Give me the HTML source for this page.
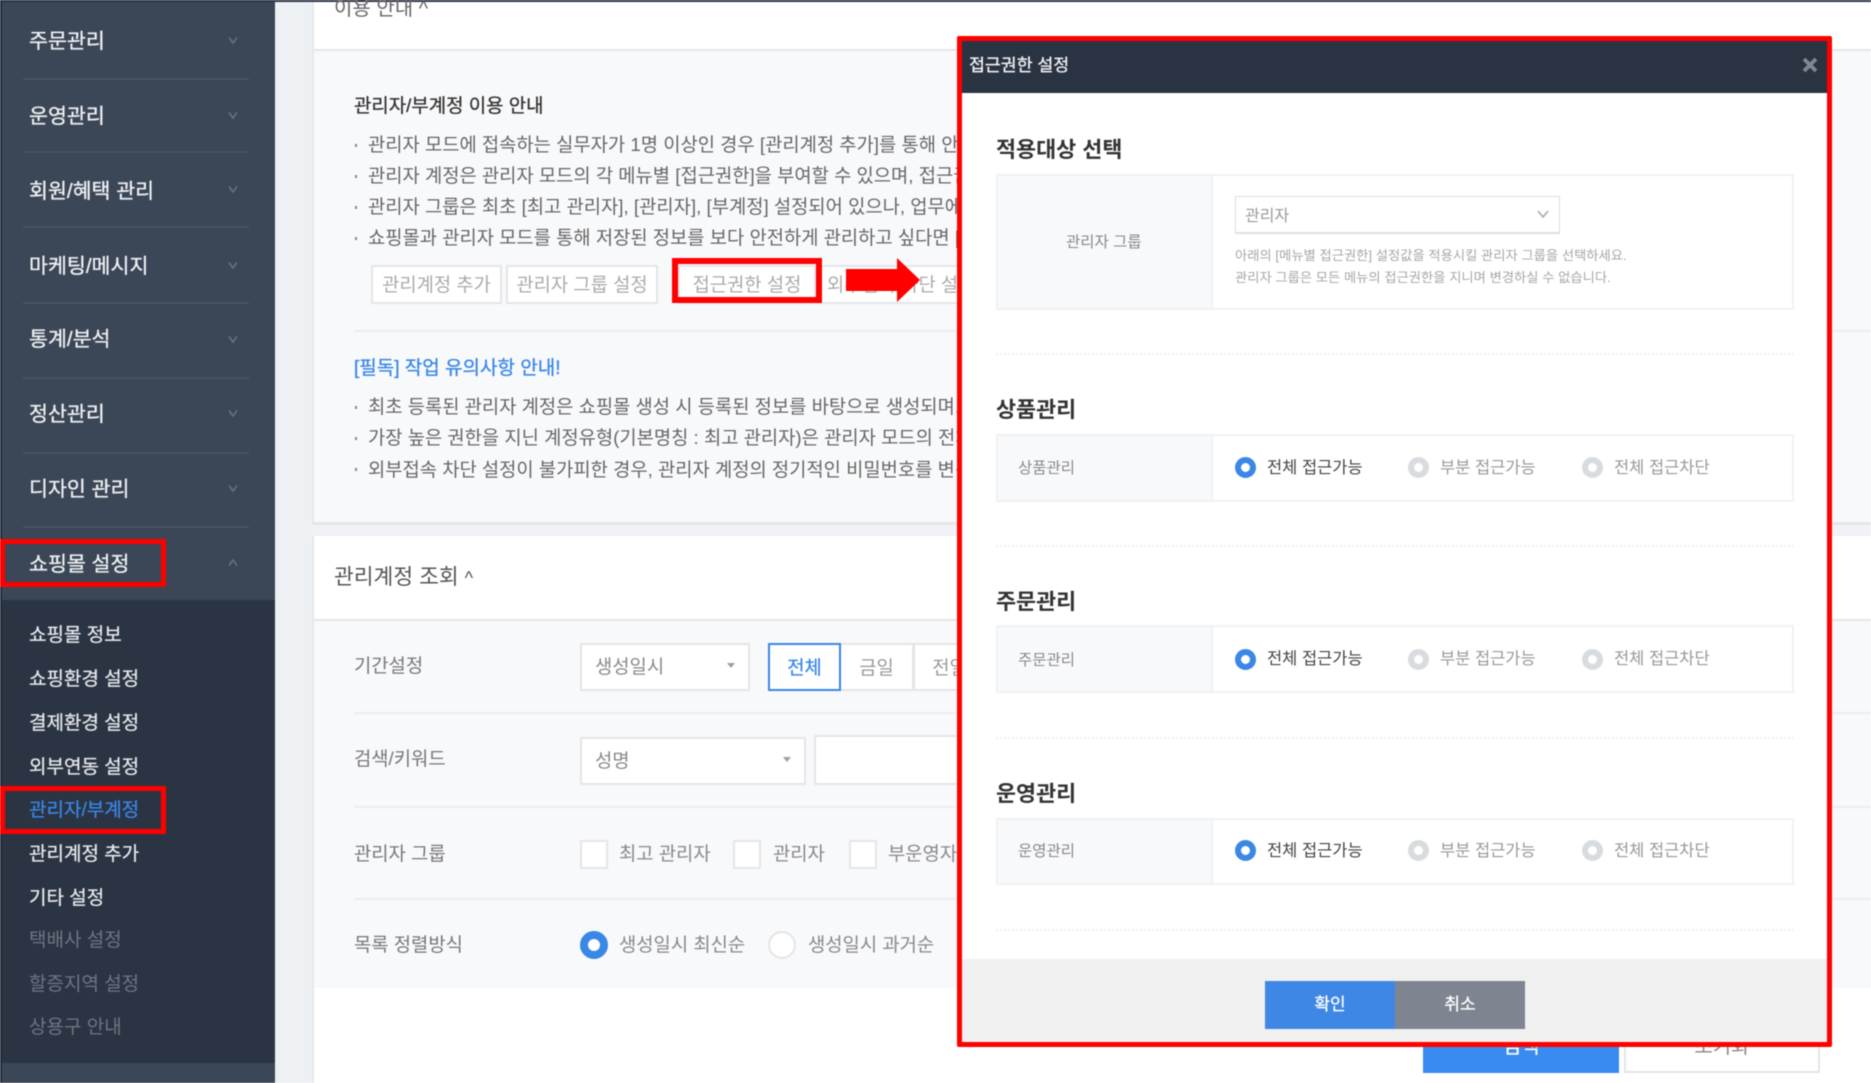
<!DOCTYPE html>
<html lang="ko"><head><meta charset="utf-8"><title>접근권한 설정</title>
<style>
*{box-sizing:border-box;margin:0;padding:0}
html,body{width:1871px;height:1083px;overflow:hidden;background:#fff}
body{position:relative;font-family:"Liberation Sans","Noto Sans CJK KR",sans-serif;filter:blur(.45px)}
.a{position:absolute}
.t{position:absolute;white-space:nowrap;line-height:30px;height:30px}
.side{color:#eef0f3;font-size:20.6px;-webkit-text-stroke:.35px #eef0f3;left:29px}
.sub{color:#e6e9ed;font-size:19px;-webkit-text-stroke:.25px #e6e9ed;left:29px}
.sub.off{color:#6c7683;-webkit-text-stroke:0}
.sep{position:absolute;left:23px;width:226px;height:2px;background:#475262}
.chev{position:absolute;left:228px;width:10px;height:10px}
.g{color:#666;font-size:18.75px;left:368px}
.dot{position:absolute;left:355px;width:2px;height:3px;background:#888}
.line{position:absolute;left:354px;right:0;height:2px;background:#eceef1}
.box{position:absolute;background:#fff;border:2px solid #e3e5e8}
.lab{color:#777;font-size:18.8px;left:354px}
.val{color:#888;font-size:18.8px}
.btn{position:absolute;background:#fff;border:2px solid #e3e5e8;color:#aaa;font-size:18.75px;text-align:center;line-height:35px;white-space:nowrap;overflow:hidden}
.h2{color:#333;font-size:21.8px;font-weight:700;left:996px}
.tb{position:absolute;left:996px;width:798px;background:#fff;border:2px solid #f0f1f3}
.th{position:absolute;left:0;top:0;bottom:0;width:215px;background:#f8f9fb;border-right:2px solid #f0f1f3}
.mt{color:#888;font-size:15.5px}
.dash{position:absolute;left:996px;width:798px;height:0;border-top:2px dotted #eeeff1}
.r{position:absolute;width:21px;height:21px;border-radius:50%;border:6px solid #d9dcdf;background:#fff}
.r.on{border-color:#3a87e6}
.rl{font-size:16.5px;color:#999}
.rl.on{color:#444}
</style></head><body>

<!-- main background -->
<div class="a" style="left:0;top:0;width:1871px;height:2px;background:#2c3442"></div>
<div class="a" style="left:275px;top:2px;width:37px;height:1081px;background:#eef1f4"></div>
<div class="a" style="left:312px;top:2px;right:0;height:48px;background:#fff"></div>
<div class="a" style="left:312px;top:49px;right:0;height:2px;background:#e3e6ea"></div>
<div class="a" style="left:312px;top:51px;right:0;height:471px;background:#f8f9fb"></div>
<div class="a" style="left:312px;top:2px;width:2px;height:521px;background:#e6e9ed"></div>
<div class="a" style="left:312px;top:522px;right:0;height:3px;background:#e3e6ea"></div>
<div class="a" style="left:312px;top:525px;right:0;height:11px;background:#f0f2f5"></div>
<div class="a" style="left:312px;top:536px;right:0;height:84px;background:#fff"></div>
<div class="a" style="left:312px;top:619px;right:0;height:2px;background:#e3e6ea"></div>
<div class="a" style="left:312px;top:621px;right:0;height:367px;background:#f8f9fb"></div>
<div class="a" style="left:312px;top:536px;width:2px;height:547px;background:#e6e9ed"></div>

<!-- sidebar -->
<div class="a" style="left:0;top:0;width:2px;height:1083px;background:#222a36"></div>
<div class="a" style="left:2px;top:2px;width:273px;height:1081px;background:#3b4656"></div>
<div class="a" style="left:2px;top:600px;width:273px;height:463px;background:#2b3443"></div>

<div class="t side" style="top:27px">주문관리</div>
<div class="t side" style="top:102px">운영관리</div>
<div class="t side" style="top:177px">회원/혜택 관리</div>
<div class="t side" style="top:252px">마케팅/메시지</div>
<div class="t side" style="top:325px">통계/분석</div>
<div class="t side" style="top:400px">정산관리</div>
<div class="t side" style="top:475px">디자인 관리</div>
<div class="t side" style="top:550px">쇼핑몰 설정</div>

<div class="sep" style="top:78px"></div><div class="sep" style="top:151px"></div><div class="sep" style="top:226px"></div><div class="sep" style="top:302px"></div><div class="sep" style="top:377px"></div><div class="sep" style="top:452px"></div><div class="sep" style="top:526px"></div>

<svg class="chev" style="top:35px" viewBox="0 0 10 10"><path d="M1 2.5L5 8L9 2.5" fill="none" stroke="#667181" stroke-width="1.6"/></svg>
<svg class="chev" style="top:110px" viewBox="0 0 10 10"><path d="M1 2.5L5 8L9 2.5" fill="none" stroke="#667181" stroke-width="1.6"/></svg>
<svg class="chev" style="top:184px" viewBox="0 0 10 10"><path d="M1 2.5L5 8L9 2.5" fill="none" stroke="#667181" stroke-width="1.6"/></svg>
<svg class="chev" style="top:260px" viewBox="0 0 10 10"><path d="M1 2.5L5 8L9 2.5" fill="none" stroke="#667181" stroke-width="1.6"/></svg>
<svg class="chev" style="top:334px" viewBox="0 0 10 10"><path d="M1 2.5L5 8L9 2.5" fill="none" stroke="#667181" stroke-width="1.6"/></svg>
<svg class="chev" style="top:408px" viewBox="0 0 10 10"><path d="M1 2.5L5 8L9 2.5" fill="none" stroke="#667181" stroke-width="1.6"/></svg>
<svg class="chev" style="top:483px" viewBox="0 0 10 10"><path d="M1 2.5L5 8L9 2.5" fill="none" stroke="#667181" stroke-width="1.6"/></svg>
<svg class="chev" style="top:558px" viewBox="0 0 10 10"><path d="M1 7.5L5 2L9 7.5" fill="none" stroke="#667181" stroke-width="1.6"/></svg>

<div class="t sub" style="top:621px">쇼핑몰 정보</div>
<div class="t sub" style="top:665px">쇼핑환경 설정</div>
<div class="t sub" style="top:709px">결제환경 설정</div>
<div class="t sub" style="top:753px">외부연동 설정</div>
<div class="t sub" style="top:796px;color:#3a87e6;-webkit-text-stroke-color:#3a87e6">관리자/부계정</div>
<div class="t sub" style="top:840px">관리계정 추가</div>
<div class="t sub" style="top:884px">기타 설정</div>
<div class="t sub off" style="top:926px">택배사 설정</div>
<div class="t sub off" style="top:970px">할증지역 설정</div>
<div class="t sub off" style="top:1013px">상용구 안내</div>

<!-- red highlight boxes left -->
<div class="a" style="left:0;top:539px;width:166px;height:48px;border:5px solid #f00"></div>
<div class="a" style="left:0;top:786px;width:166px;height:48px;border:5px solid #f00"></div>

<!-- top card -->
<div class="t" style="left:334px;top:-6px;font-size:20px;color:#666">이용 안내 ^</div>
<div class="t" style="left:354px;top:92px;font-size:18.9px;-webkit-text-stroke:.3px #333;color:#333">관리자/부계정 이용 안내</div>

<div class="dot" style="top:144px"></div><div class="dot" style="top:175px"></div><div class="dot" style="top:206px"></div><div class="dot" style="top:237px"></div>
<div class="t g" style="top:130px">관리자 모드에 접속하는 실무자가 1명 이상인 경우 [관리계정 추가]를 통해 안전하게 추가합니다</div>
<div class="t g" style="top:161px">관리자 계정은 관리자 모드의 각 메뉴별 [접근권한]을 부여할 수 있으며, 접근권한을 설정합니다</div>
<div class="t g" style="top:192px">관리자 그룹은 최초 [최고 관리자], [관리자], [부계정] 설정되어 있으나, 업무에 맞게 변경합니다</div>
<div class="t g" style="top:223px">쇼핑몰과 관리자 모드를 통해 저장된 정보를 보다 안전하게 관리하고 싶다면 [외부접속 차단]</div>

<div class="btn" style="left:371px;top:265px;width:131px;height:39px">관리계정 추가</div>
<div class="btn" style="left:506px;top:265px;width:152px;height:39px">관리자 그룹 설정</div>
<div class="btn" style="left:678px;top:265px;width:138px;height:39px">접근권한 설정</div>
<div class="btn" style="left:816px;top:265px;width:176px;height:39px;text-align:left;padding-left:9px">외부접속 차단 설정</div>
<div class="a" style="left:672px;top:258px;width:150px;height:45px;border:6px solid #f00"></div>
<svg class="a" style="left:846px;top:257px" width="75" height="46" viewBox="0 0 75 46"><path d="M0 12H51V1L74 23L51 45V34H0Z" fill="#f00"/></svg>

<div class="line" style="top:330px"></div>
<div class="t" style="left:354px;top:354px;font-size:19px;-webkit-text-stroke:.3px #3a87e6;color:#3a87e6">[필독] 작업 유의사항 안내!</div>
<div class="dot" style="top:406px"></div><div class="dot" style="top:437px"></div><div class="dot" style="top:468px"></div>
<div class="t g" style="top:392px">최초 등록된 관리자 계정은 쇼핑몰 생성 시 등록된 정보를 바탕으로 생성되며, 변경이 가능합니다</div>
<div class="t g" style="top:423px">가장 높은 권한을 지닌 계정유형(기본명칭 : 최고 관리자)은 관리자 모드의 전체 메뉴를 이용합니다</div>
<div class="t g" style="top:455px">외부접속 차단 설정이 불가피한 경우, 관리자 계정의 정기적인 비밀번호를 변경해 주세요</div>

<!-- second card -->
<div class="t" style="left:334px;top:562px;font-size:21.5px;color:#555">관리계정 조회 <span style="font-size:18px">^</span></div>

<div class="t lab" style="top:651px">기간설정</div>
<div class="box" style="left:580px;top:643px;width:170px;height:48px"></div>
<div class="t val" style="left:595px;top:652px">생성일시</div>
<svg class="a" style="left:726px;top:662px" width="10" height="8"><path d="M1 1H9L5 6Z" fill="#9aa0a8"/></svg>
<div class="box" style="left:841px;top:643px;width:73px;height:48px;text-align:center;line-height:45px;color:#999;font-size:18.8px;border-left:0">금일</div>
<div class="box" style="left:913px;top:643px;width:73px;height:48px;text-align:center;line-height:45px;color:#999;font-size:18.8px;border-left:2px solid #e3e5e8">전일</div>
<div class="box" style="left:768px;top:643px;width:73px;height:48px;border-color:#3a87e6;text-align:center;line-height:45px;color:#3a87e6;font-size:18.8px;-webkit-text-stroke:.25px #3a87e6">전체</div>
<div class="line" style="top:712px"></div>

<div class="t lab" style="top:744px">검색/키워드</div>
<div class="box" style="left:580px;top:737px;width:226px;height:48px"></div>
<div class="t val" style="left:595px;top:746px">성명</div>
<svg class="a" style="left:782px;top:756px" width="10" height="8"><path d="M1 1H9L5 6Z" fill="#9aa0a8"/></svg>
<div class="box" style="left:814px;top:735px;width:200px;height:50px"></div>
<div class="line" style="top:806px"></div>

<div class="t lab" style="top:839px">관리자 그룹</div>
<div class="box" style="left:580px;top:840px;width:28px;height:29px"></div>
<div class="t val" style="left:619px;top:839px">최고 관리자</div>
<div class="box" style="left:733px;top:840px;width:28px;height:29px"></div>
<div class="t val" style="left:773px;top:839px">관리자</div>
<div class="box" style="left:849px;top:840px;width:28px;height:29px"></div>
<div class="t val" style="left:888px;top:839px">부운영자</div>
<div class="line" style="top:898px"></div>

<div class="t lab" style="top:930px">목록 정렬방식</div>
<div class="a" style="left:580px;top:931px;width:28px;height:28px;border-radius:50%;border:8px solid #3a87e6;background:#fff"></div>
<div class="t val" style="left:619px;top:930px">생성일시 최신순</div>
<div class="a" style="left:768px;top:931px;width:28px;height:28px;border-radius:50%;border:2px solid #e3e5e8;background:#fff"></div>
<div class="t val" style="left:808px;top:930px">생성일시 과거순</div>

<!-- bottom buttons behind modal -->
<div class="a" style="left:1423px;top:1020px;width:196px;height:53px;background:#3a8bef;color:#fff;font-size:20px;-webkit-text-stroke:.3px #fff;text-align:center;line-height:54px">검색</div>
<div class="a" style="left:1624px;top:1020px;width:196px;height:53px;background:#fff;border:2px solid #e3e5e8;color:#888;font-size:20px;text-align:center;line-height:50px">초기화</div>

<!-- modal -->
<div class="a" style="left:957px;top:36px;width:875px;height:1011px;border:5px solid #f00;border-radius:2px;background:#fff"></div>
<div class="a" style="left:962px;top:41px;width:865px;height:52px;background:#2a3342"></div>
<div class="t" style="left:969px;top:50px;font-size:17.3px;-webkit-text-stroke:.3px #f2f3f5;color:#f2f3f5">접근권한 설정</div>
<svg class="a" style="left:1802px;top:57px" width="16" height="16" viewBox="0 0 16 16"><path d="M2 2L14 14M14 2L2 14" stroke="#7f8794" stroke-width="3.8" fill="none"/></svg>

<div class="t h2" style="top:135px">적용대상 선택</div>
<div class="tb" style="top:174px;height:136px"><div class="th"></div></div>
<div class="t mt" style="left:1066px;top:228px">관리자 그룹</div>
<div class="a" style="left:1235px;top:196px;width:325px;height:38px;background:#fff;border:1px solid #dcdfe2;border-bottom-width:2px"></div>
<div class="t" style="left:1245px;top:202px;font-size:16px;color:#999">관리자</div>
<svg class="a" style="left:1537px;top:210px" width="12" height="9" viewBox="0 0 12 9"><path d="M1 1L6 7L11 1" fill="none" stroke="#aaa" stroke-width="1.6"/></svg>
<div class="t" style="left:1235px;top:241px;font-size:13.3px;color:#a6a6a6">아래의 [메뉴별 접근권한] 설정값을 적용시킬 관리자 그룹을 선택하세요.</div>
<div class="t" style="left:1235px;top:263px;font-size:13.3px;color:#a6a6a6">관리자 그룹은 모든 메뉴의 접근권한을 지니며 변경하실 수 없습니다.</div>
<div class="dash" style="top:353px"></div>

<div class="t h2" style="top:395px">상품관리</div>
<div class="tb" style="top:434px;height:68px"><div class="th"></div></div>
<div class="t mt" style="left:1018px;top:454px">상품관리</div>
<div class="r on" style="left:1235px;top:457px"></div><div class="t rl on" style="left:1267px;top:453px">전체 접근가능</div>
<div class="r" style="left:1408px;top:457px"></div><div class="t rl" style="left:1440px;top:453px">부분 접근가능</div>
<div class="r" style="left:1582px;top:457px"></div><div class="t rl" style="left:1614px;top:453px">전체 접근차단</div>
<div class="dash" style="top:545px"></div>

<div class="t h2" style="top:587px">주문관리</div>
<div class="tb" style="top:625px;height:68px"><div class="th"></div></div>
<div class="t mt" style="left:1018px;top:646px">주문관리</div>
<div class="r on" style="left:1235px;top:649px"></div><div class="t rl on" style="left:1267px;top:644px">전체 접근가능</div>
<div class="r" style="left:1408px;top:649px"></div><div class="t rl" style="left:1440px;top:644px">부분 접근가능</div>
<div class="r" style="left:1582px;top:649px"></div><div class="t rl" style="left:1614px;top:644px">전체 접근차단</div>
<div class="dash" style="top:737px"></div>

<div class="t h2" style="top:779px">운영관리</div>
<div class="tb" style="top:818px;height:67px"><div class="th"></div></div>
<div class="t mt" style="left:1018px;top:837px">운영관리</div>
<div class="r on" style="left:1235px;top:840px"></div><div class="t rl on" style="left:1267px;top:836px">전체 접근가능</div>
<div class="r" style="left:1408px;top:840px"></div><div class="t rl" style="left:1440px;top:836px">부분 접근가능</div>
<div class="r" style="left:1582px;top:840px"></div><div class="t rl" style="left:1614px;top:836px">전체 접근차단</div>
<div class="dash" style="top:929px"></div>

<div class="a" style="left:962px;top:959px;width:865px;height:83px;background:#f0f0f0"></div>
<div class="a" style="left:1265px;top:981px;width:130px;height:48px;background:#3f87e5;color:#fff;font-size:17px;-webkit-text-stroke:.3px #fff;text-align:center;line-height:48px">확인</div>
<div class="a" style="left:1395px;top:981px;width:130px;height:48px;background:#7e8490;color:#fff;font-size:17px;-webkit-text-stroke:.3px #fff;text-align:center;line-height:48px">취소</div>

</body></html>
